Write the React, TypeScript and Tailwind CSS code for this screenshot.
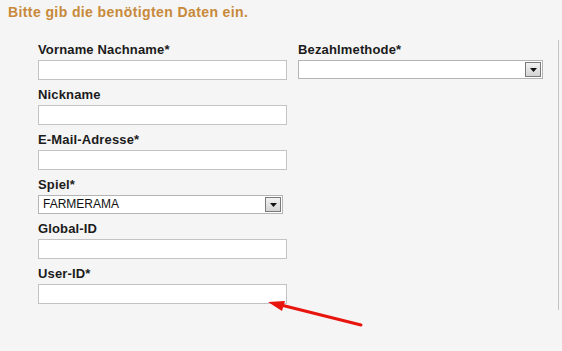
import React from 'react';

function DropButton() {
  return (
    <div className="absolute right-[1px] top-[1px] w-[16px] h-[15px] border border-[#7a7a7a] bg-gradient-to-b from-[#f2f2f2] to-[#d4d4d4] flex items-center justify-center">
      <svg width="7" height="4" viewBox="0 0 7 4">
        <path d="M0 0 H7 L3.5 4 Z" fill="#111" />
      </svg>
    </div>
  );
}

function Field({ label, select, value }: { label: string; select?: boolean; value?: string }) {
  return (
    <div className="mb-[7px]">
      <div className="text-[13px] leading-[15px] font-bold tracking-[0.15px] text-[#1b1b1b] mb-[3px]">{label}</div>
      {select ? (
        <div className="relative w-[245px] h-[19px] border border-[#b4b4b4] bg-white text-[12px] leading-[17px] text-[#111] pl-[4px]">
          {value}
          <DropButton />
        </div>
      ) : (
        <div className="w-[249px] h-[20px] border border-[#c3c3c3] bg-white" />
      )}
    </div>
  );
}

export default function App() {
  return (
    <div className="relative w-[562px] h-[351px] bg-[#f5f5f5] font-['Liberation_Sans',Arial,sans-serif]">
      <h1 className="pl-[8px] pt-[4px] text-[14px] leading-[16px] font-bold tracking-[0.4px] text-[#c8893a]">
        Bitte gib die benötigten Daten ein.
      </h1>

      {/* Formular */}
      <div className="mt-[20px] w-[559px] h-[270px] border-r border-[#c4c4c4] flex gap-[11px] pl-[38px] pt-[2px]">
        <div className="flex flex-col w-[249px]">
          <Field label="Vorname Nachname*" />
          <Field label="Nickname" />
          <Field label="E-Mail-Adresse*" />
          <Field label="Spiel*" select value="FARMERAMA" />
          <Field label="Global-ID" />
          <Field label="User-ID*" />
        </div>
        <div className="w-[245px]">
          <Field label="Bezahlmethode*" select />
        </div>
      </div>

      {/* Pfeil */}
      <svg className="absolute left-0 top-0 pointer-events-none" width="562" height="351">
        <line x1="361" y1="325" x2="281" y2="305" stroke="#e8150f" strokeWidth="3" strokeLinecap="round" />
        <polygon points="268,302 285,301 282,311" fill="#e8150f" />
      </svg>
    </div>
  );
}
